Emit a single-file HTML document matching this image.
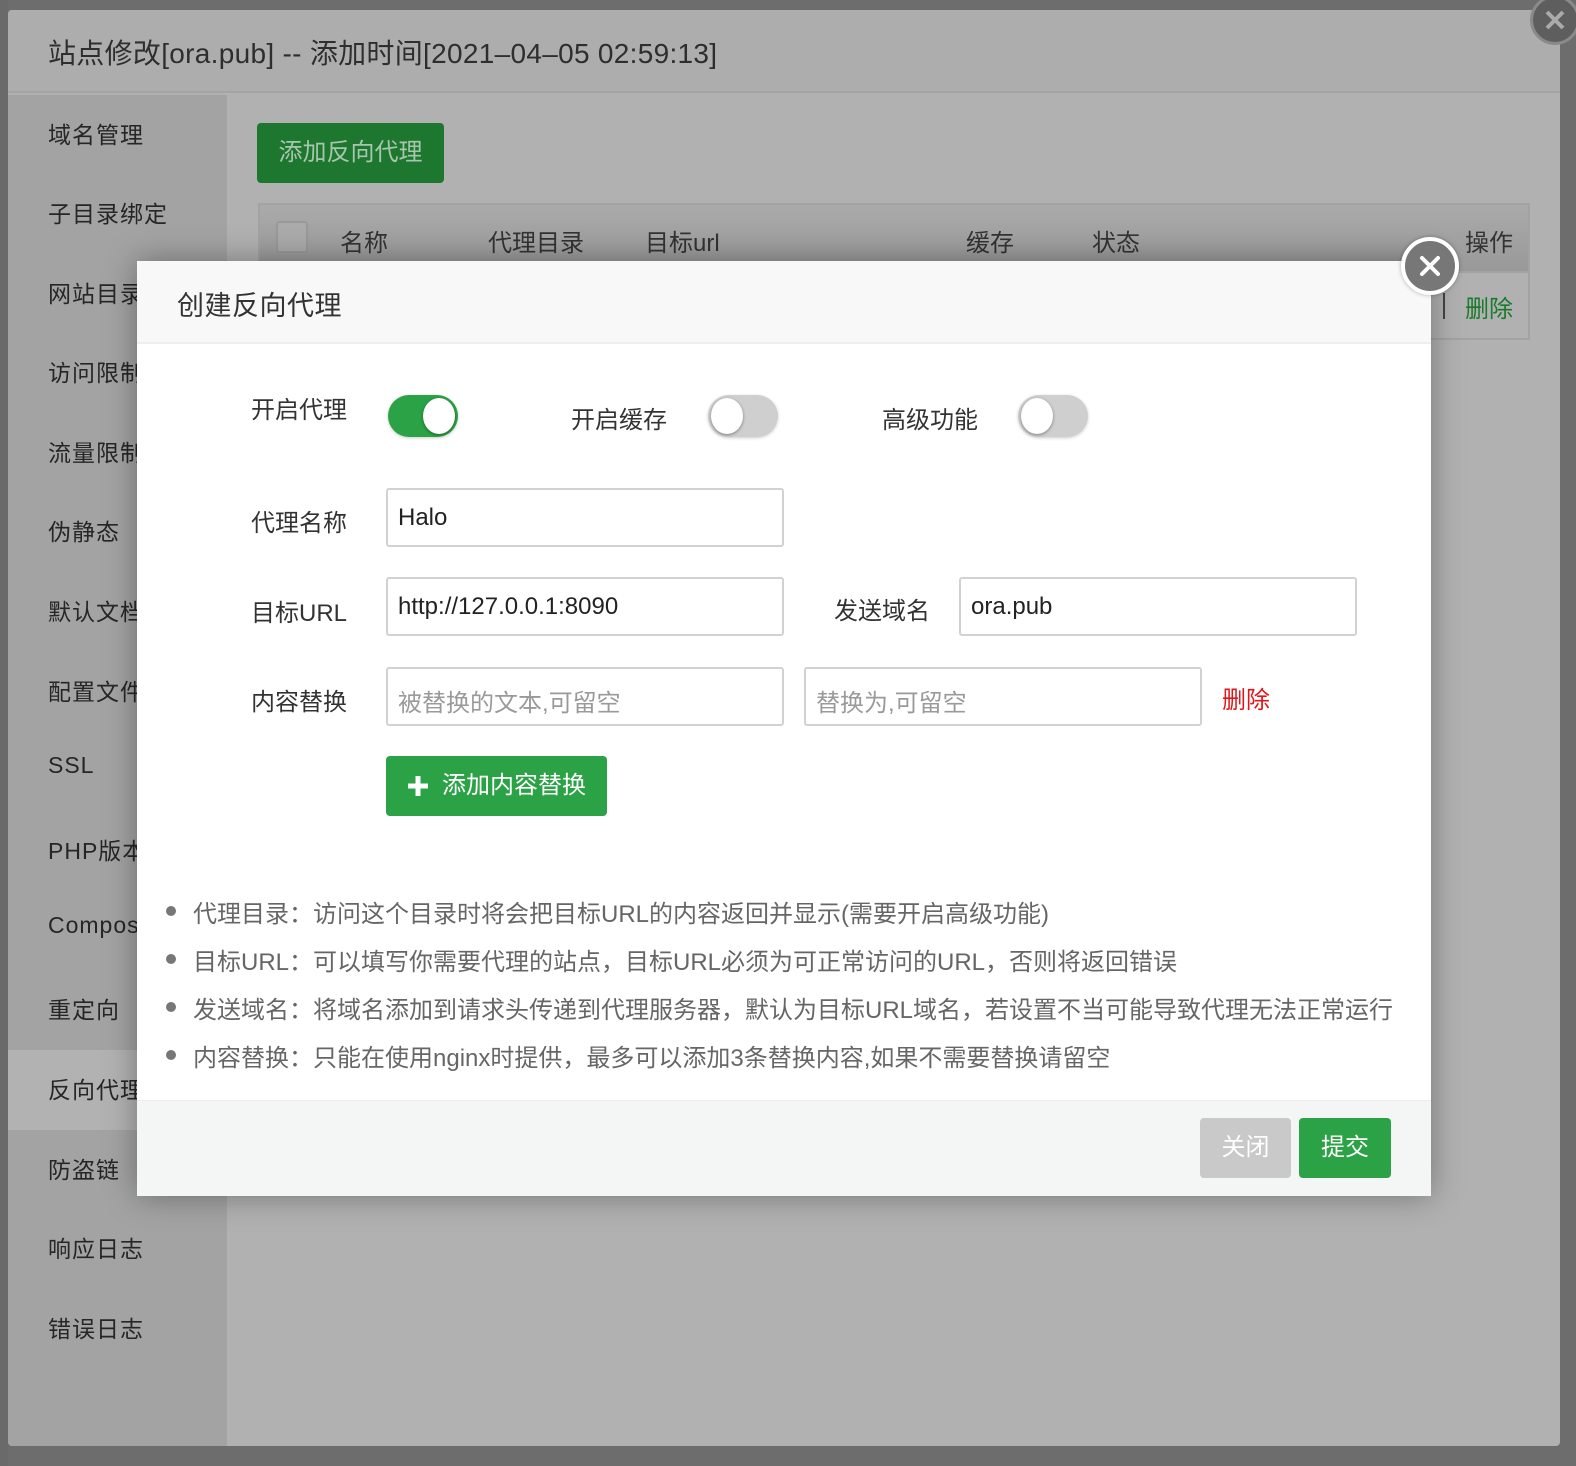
<!DOCTYPE html>
<html><head><meta charset="utf-8"><style>
*{margin:0;padding:0;box-sizing:border-box}
body{width:1576px;height:1466px;background:#6d6d6d;position:relative;overflow:hidden;font-family:"Liberation Sans","Noto Sans CJK SC",sans-serif;color:#333}
.a{position:absolute}
.lstrip{left:0;top:0;width:8px;height:1466px;background:#6a6a6a}
.outer{left:8px;top:10px;width:1552px;height:1436px;background:#b1b1b1;border-radius:4px;overflow:hidden}
.ohd{left:0;top:0;width:1552px;height:83px;background:#adadad;border-bottom:2px solid #a4a4a4;font-size:28px;color:#2e2e2e;padding:22px 0 0 40px;letter-spacing:0.3px}
.side{left:0;top:85px;width:219px;height:1351px;background:#a3a3a3}
.side div{position:absolute;left:40px;font-size:23px;color:#262626;letter-spacing:1px}
.act{left:0;top:955px;width:219px;height:80px;background:#b2b2b2}
.btn1{left:249px;top:113px;width:187px;height:60px;background:#1e772f;border-radius:4px;color:#a7c6ad;font-size:24px;text-align:center;line-height:60px}
.tbl{left:250px;top:193px;width:1272px;height:137px;border:2px solid #a3a3a3}
.th{left:0;top:0;width:1268px;height:68px;background:linear-gradient(#aaa,#999);border-bottom:2px solid #a3a3a3}
.th span{position:absolute;top:18px;font-size:24px;color:#333}
.cb{left:16px;top:16px;width:32px;height:32px;border:2px solid #999;border-radius:3px;background:#ababab}
.bx{left:1530px;top:-5px;width:50px;height:50px;border-radius:50%;background:#5e5e5e;border:3px solid #8a8a8a}
.dlg{left:137px;top:261px;width:1294px;height:935px;background:#fff;box-shadow:0 0 30px rgba(0,0,0,.35)}
.dhd{left:0;top:0;width:1294px;height:83px;background:#f8f8f8;border-bottom:2px solid #efefef;font-size:27px;padding:23px 0 0 40px;color:#333;letter-spacing:0.5px}
.lbl{font-size:24px;color:#333}
.tg{width:70px;height:42px;border-radius:21px;background:#cfcfcf;box-shadow:0 1px 3px rgba(0,0,0,.2)}
.tg i{position:absolute;top:3px;left:3px;width:32px;height:36px;border-radius:50%;background:#fff;box-shadow:0 1px 3px rgba(0,0,0,.4)}
.tg.on{background:#2ba245}.tg.on i{left:35px}
.in{height:59px;border:2px solid #d2d2d2;border-radius:3px;font-size:24px;padding:14px 0 0 10px;color:#222;background:#fff}
.ph{color:#9a9a9a}
.gbtn{left:249px;top:495px;width:221px;height:60px;background:#2ba245;border-radius:4px;color:#fff;font-size:24px;line-height:60px;padding-left:56px}
.note{font-size:24px;color:#666;letter-spacing:0;white-space:nowrap}
.note b{position:absolute;left:-27px;top:12px;width:10px;height:10px;border-radius:50%;background:#777}
.ft{left:0;top:839px;width:1294px;height:96px;background:#f4f6f5;border-top:1px solid #eceeed}
.cx{left:1264px;top:-24px;width:58px;height:58px;border-radius:50%;background:#777;border:4px solid #fff;box-shadow:0 0 4px rgba(0,0,0,.3)}
</style></head><body>
<div class="a lstrip"></div>
<div class="a outer">
 <div class="a ohd">站点修改[ora.pub] -- 添加时间[2021–04–05 02:59:13]</div>
 <div class="a side">
  <div class="a act" style="left:0"></div>
  <div style="top:21px">域名管理</div><div style="top:100px">子目录绑定</div><div style="top:180px">网站目录</div><div style="top:259px">访问限制</div><div style="top:339px">流量限制</div><div style="top:418px">伪静态</div><div style="top:498px">默认文档</div><div style="top:578px">配置文件</div><div style="top:657px">SSL</div><div style="top:737px">PHP版本</div><div style="top:817px">Composer</div><div style="top:896px">重定向</div><div style="top:976px">反向代理</div><div style="top:1056px">防盗链</div><div style="top:1135px">响应日志</div><div style="top:1215px">错误日志</div>
 </div>
 <div class="a btn1">添加反向代理</div>
 <div class="a tbl">
  <div class="a th"><div class="a cb"></div>
   <span style="left:80px">名称</span><span style="left:228px">代理目录</span><span style="left:385px">目标url</span><span style="left:706px">缓存</span><span style="left:832px">状态</span><span style="left:1205px">操作</span></div>
  <span class="a" style="left:1183px;top:88px;width:2px;height:26px;background:#444"></span>
  <span class="a" style="left:1205px;top:84px;font-size:24px;color:#1a7a2c">删除</span>
 </div>
</div>
<div class="a bx"><svg width="44" height="44" style="position:absolute;left:0;top:0"><path d="M14 14L30 30M30 14L14 30" stroke="#aaa" stroke-width="4"/></svg></div>
<div class="a dlg">
 <div class="a dhd">创建反向代理</div>
 <div class="a cx"><svg width="50" height="50"><path d="M17 17L33 33M33 17L17 33" stroke="#fff" stroke-width="4" stroke-linecap="round"/></svg></div>
 <div class="a lbl" style="left:114px;top:129px">开启代理</div>
 <div class="a tg on" style="left:251px;top:134px"><i></i></div>
 <div class="a lbl" style="left:434px;top:139px">开启缓存</div>
 <div class="a tg" style="left:571px;top:134px"><i></i></div>
 <div class="a lbl" style="left:745px;top:139px">高级功能</div>
 <div class="a tg" style="left:881px;top:134px"><i></i></div>
 <div class="a lbl" style="left:114px;top:242px">代理名称</div>
 <div class="a in" style="left:249px;top:227px;width:398px">Halo</div>
 <div class="a lbl" style="left:114px;top:332px">目标URL</div>
 <div class="a in" style="left:249px;top:316px;width:398px">http://127.0.0.1:8090</div>
 <div class="a lbl" style="left:697px;top:330px">发送域名</div>
 <div class="a in" style="left:822px;top:316px;width:398px">ora.pub</div>
 <div class="a lbl" style="left:114px;top:421px">内容替换</div>
 <div class="a in ph" style="left:249px;top:406px;width:398px">被替换的文本,可留空</div>
 <div class="a in ph" style="left:667px;top:406px;width:398px">替换为,可留空</div>
 <div class="a lbl" style="left:1085px;top:419px;color:#e0161b">删除</div>
 <div class="a gbtn"><svg width="24" height="24" style="position:absolute;left:20px;top:18px"><path d="M12 2V22M2 12H22" stroke="#fff" stroke-width="5"/></svg>添加内容替换</div>
 <div class="a note" style="left:56px;top:633px"><b></b>代理目录：访问这个目录时将会把目标URL的内容返回并显示(需要开启高级功能)</div>
 <div class="a note" style="left:56px;top:681px"><b></b>目标URL：可以填写你需要代理的站点，目标URL必须为可正常访问的URL，否则将返回错误</div>
 <div class="a note" style="left:56px;top:729px"><b></b>发送域名：将域名添加到请求头传递到代理服务器，默认为目标URL域名，若设置不当可能导致代理无法正常运行</div>
 <div class="a note" style="left:56px;top:777px"><b></b>内容替换：只能在使用nginx时提供，最多可以添加3条替换内容,如果不需要替换请留空</div>
 <div class="a ft">
  <div class="a" style="left:1063px;top:17px;width:91px;height:60px;background:#c9c9c9;border-radius:4px;color:#fff;font-size:24px;text-align:center;line-height:60px">关闭</div>
  <div class="a" style="left:1162px;top:17px;width:92px;height:60px;background:#2ba245;border-radius:4px;color:#fff;font-size:24px;text-align:center;line-height:60px">提交</div>
 </div>
</div>
</body></html>
